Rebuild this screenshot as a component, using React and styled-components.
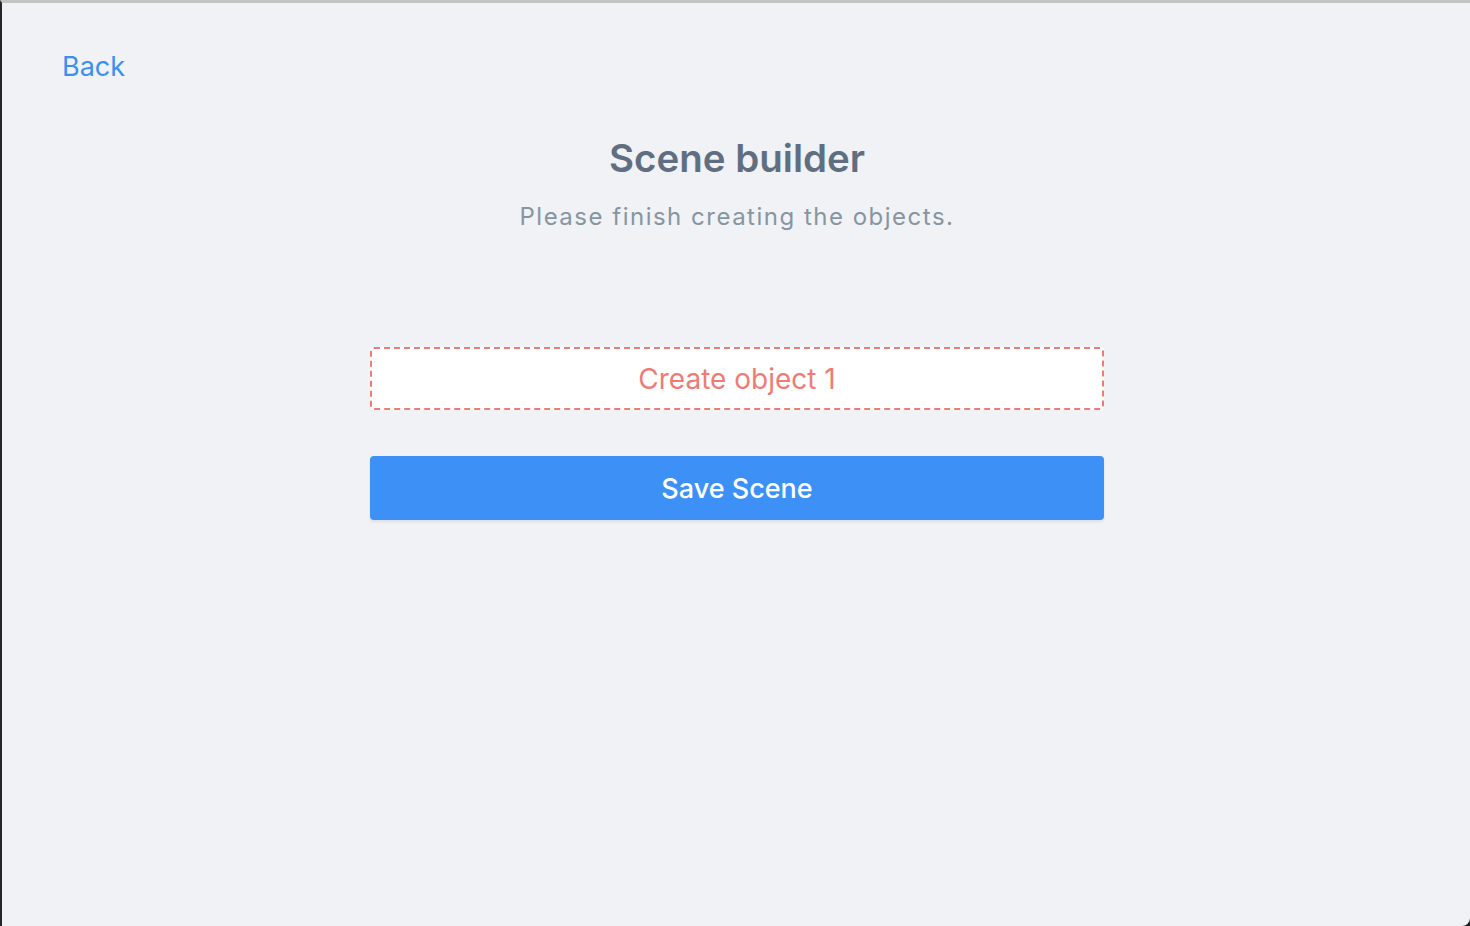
import React from "react";
import styled, { createGlobalStyle } from "styled-components";

const GlobalStyle = createGlobalStyle`
  html, body {
    margin: 0;
    padding: 0;
    background: #1f1f1f;
  }
  body {
    font-family: Inter, "Noto Sans", "Liberation Sans", sans-serif;
    -webkit-font-smoothing: antialiased;
  }
  * {
    box-sizing: border-box;
  }
`;

const Frame = styled.div`
  min-height: 100vh;
  background: #f0f2f6;
  border-top: 3px solid #c3c3c3;
  border-left: 2px solid #262626;
  border-bottom-right-radius: 8px;
  padding: 47px 0 0 60px;
  display: flex;
  flex-direction: column;
`;

const BackLink = styled.a`
  align-self: flex-start;
  font-size: 27px;
  line-height: 1.25;
  color: #3b8ff3;
  text-decoration: none;
  cursor: pointer;
  :hover {
    text-decoration: underline;
  }
`;

const Content = styled.div`
  display: flex;
  flex-direction: column;
  align-items: center;
  margin-left: -58px;
  margin-top: 51px;
`;

const Title = styled.h1`
  margin: 0;
  font-size: 38.5px;
  line-height: 1.2;
  font-weight: 600;
  color: #5f6f81;
`;

const Subtitle = styled.p`
  margin: 20px 0 0;
  font-size: 24px;
  line-height: 1.3;
  letter-spacing: 1.5px;
  color: #8795a1;
`;

const Actions = styled.div`
  width: 734px;
  margin-top: 115px;
  display: flex;
  flex-direction: column;
  gap: 46px;
`;

const ObjectSlot = styled.button`
  height: 63px;
  width: 100%;
  background: #ffffff;
  border: 2px dashed ${(p) => p.color};
  border-radius: 4px;
  color: ${(p) => p.color};
  font-family: inherit;
  font-size: 28px;
  cursor: pointer;
`;

const SaveButton = styled.button`
  height: 64px;
  width: 100%;
  background: #3d91f6;
  border: none;
  border-radius: 4px;
  box-shadow: 0 2px 3px rgba(0, 0, 0, 0.08);
  color: #ffffff;
  font-family: inherit;
  font-size: 27px;
  font-weight: 500;
  cursor: pointer;
  :hover {
    background: #2f84ea;
  }
`;

const objects = [{ id: 1, label: "Create object 1" }];

const App = () => {
  return (
    <>
      <GlobalStyle />
      <Frame>
        <BackLink>Back</BackLink>
        <Content>
          <Title>Scene builder</Title>
          <Subtitle>Please finish creating the objects.</Subtitle>
          <Actions>
            {objects.map((obj) => (
              <ObjectSlot key={obj.id} color="#ef7c74">
                {obj.label}
              </ObjectSlot>
            ))}
            <SaveButton>Save Scene</SaveButton>
          </Actions>
        </Content>
      </Frame>
    </>
  );
};

export default App;
